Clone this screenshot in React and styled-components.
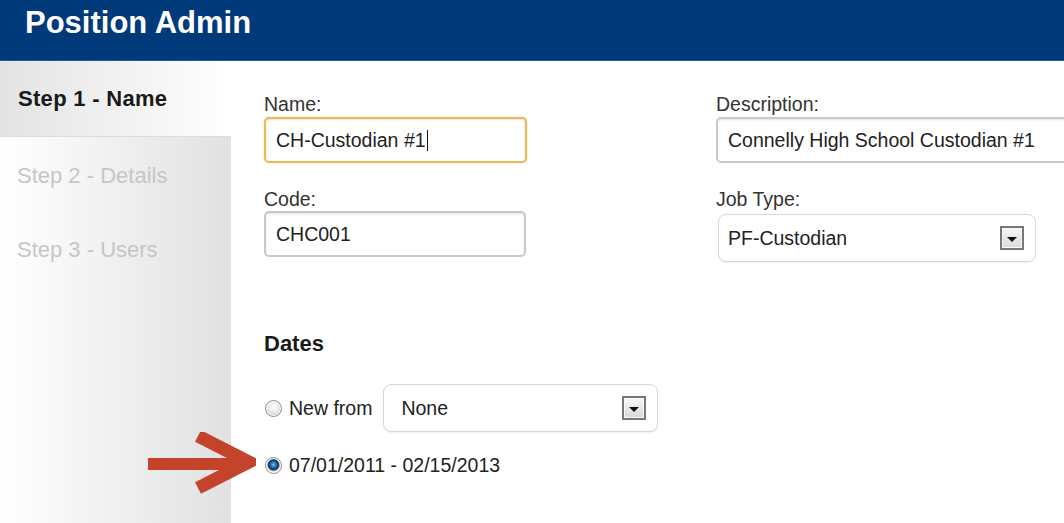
import React from "react"
import styled, { createGlobalStyle } from "styled-components"

const GlobalStyle = createGlobalStyle`
  html, body {
    margin: 0;
    padding: 0;
    background: #fff;
    overflow: hidden;
  }
  body {
    font-family: "Liberation Sans", Arial, sans-serif;
    color: #333;
  }
`

const Page = styled.div`
  width: 1064px;
  height: 523px;
  overflow: hidden;
  position: relative;
  display: flex;
  flex-direction: column;
`

const Header = styled.header`
  height: 61px;
  flex: none;
  background: #013a7a;
  border-bottom: 1px solid #2a5590;
  box-sizing: border-box;
  padding: 7px 0 0 25px;
  h1 {
    margin: 0;
    font-size: 31px;
    line-height: 31px;
    font-weight: 700;
    color: #fff;
  }
`

const Body = styled.div`
  flex: 1;
  display: flex;
`

const Sidebar = styled.nav`
  width: 231px;
  flex: none;
  display: flex;
  flex-direction: column;
`

const Step = styled.div`
  height: ${(p) => (p.active ? 75 : 74)}px;
  flex: none;
  box-sizing: border-box;
  padding-left: ${(p) => (p.active ? 18 : 17)}px;
  padding-top: ${(p) => (p.active ? 0 : 3)}px;
  display: flex;
  align-items: center;
  font-size: 22px;
  font-weight: ${(p) => (p.active ? 700 : 400)};
  letter-spacing: ${(p) => (p.active ? 0.3 : 0)}px;
  color: ${(p) => (p.active ? "#1a1a1a" : "#c6c6c6")};
  background: ${(p) =>
    p.active ? "linear-gradient(to right, #e3e3e3, #ffffff)" : "transparent"};
`

const StepList = styled.div`
  flex: 1;
  border-top: 1px solid #dcdcdc;
  background: linear-gradient(to right, #ffffff, #e1e1e1);
`

const Main = styled.main`
  flex: 1;
  padding: 32px 0 0 33px;
  font-size: 19.5px;
`

const FormGrid = styled.div`
  display: grid;
  grid-template-columns: 452px 1fr;
  row-gap: 25px;
`

const Field = styled.div`
  display: flex;
  flex-direction: column;
  gap: ${(p) => p.gap ?? 2}px;
`

const Label = styled.label`
  line-height: 22px;
  color: #333;
`

const TextBox = styled.div`
  box-sizing: border-box;
  width: ${(p) => p.width}px;
  height: 46px;
  border: 2px solid ${(p) => (p.focused ? "#e9b95a" : "#c9c9c9")};
  border-radius: 5px;
  box-shadow: inset 0 1px 2px rgba(0, 0, 0, 0.12)
    ${(p) => (p.focused ? ", 0 0 2px rgba(233, 185, 90, 0.7)" : "")};
  padding-left: 10px;
  display: flex;
  align-items: center;
  color: #222;
  white-space: nowrap;
`

const Caret = styled.span`
  display: inline-block;
  width: 1.5px;
  height: 21px;
  background: #111;
  margin-left: 1px;
`

const SelectBox = styled.div`
  box-sizing: border-box;
  width: ${(p) => p.width}px;
  height: 48px;
  margin-left: ${(p) => p.offset ?? 0}px;
  border: 1px solid #d6d6d6;
  border-radius: 8px;
  box-shadow: 0 1px 1px rgba(0, 0, 0, 0.06);
  padding: 0 11px 0 ${(p) => p.pad}px;
  display: flex;
  align-items: center;
  justify-content: space-between;
  color: #222;
  background: #fff;
`

const DropButton = styled.span`
  width: 24px;
  height: 24px;
  box-sizing: border-box;
  border: 2px solid #777;
  box-shadow: inset 0 0 0 1px #f8f8f8;
  background: linear-gradient(#f6f6f6, #d9d9d9);
  display: flex;
  align-items: center;
  justify-content: center;
  padding-top: 2px;
  &::after {
    content: "";
    border-left: 5px solid transparent;
    border-right: 5px solid transparent;
    border-top: 5px solid #111;
  }
`

const Section = styled.h2`
  margin: 69px 0 0;
  font-size: 22px;
  line-height: 26px;
  font-weight: 700;
  color: #1a1a1a;
`

const RadioRow = styled.div`
  display: flex;
  align-items: center;
  margin-top: ${(p) => p.top}px;
  gap: 7px;
  min-height: 24px;
`

const Radio = styled.span`
  width: 17px;
  height: 17px;
  box-sizing: border-box;
  border-radius: 50%;
  border: 1px solid #8e8e8e;
  flex: none;
  margin-left: 1px;
  background: ${(p) =>
    p.checked
      ? "radial-gradient(circle at 50% 45%, #7cc4f2 0, #1e7ac4 2.5px, #0b3e78 4.5px, #3b3b3b 5.2px, #9a9a9a 6px, #f4f4f4 7px)"
      : "radial-gradient(circle at 50% 40%, #ffffff 0, #f2f2f2 4px, #d4d4d4 8px)"};
  box-shadow: inset 0 0 0 1px #fff;
`

const RadioText = styled.span`
  color: #222;
  margin-right: 4px;
`

const Annotation = styled.svg`
  position: absolute;
  left: 148px;
  top: 432px;
`

export default function App() {
  return (
    <>
      <GlobalStyle />
      <Page>
        <Header>
          <h1>Position Admin</h1>
        </Header>
        <Body>
          <Sidebar>
            <Step active>Step 1 - Name</Step>
            <StepList>
              <Step>Step 2 - Details</Step>
              <Step>Step 3 - Users</Step>
            </StepList>
          </Sidebar>
          <Main>
            <FormGrid>
              <Field>
                <Label>Name:</Label>
                <TextBox width={263} focused>
                  CH-Custodian #1
                  <Caret />
                </TextBox>
              </Field>
              <Field>
                <Label>Description:</Label>
                <TextBox width={370}>Connelly High School Custodian #1</TextBox>
              </Field>
              <Field gap={1}>
                <Label>Code:</Label>
                <TextBox width={262}>CHC001</TextBox>
              </Field>
              <Field gap={4}>
                <Label>Job Type:</Label>
                <SelectBox width={318} offset={2} pad={9}>
                  PF-Custodian
                  <DropButton />
                </SelectBox>
              </Field>
            </FormGrid>

            <Section>Dates</Section>

            <RadioRow top={27}>
              <Radio />
              <RadioText>New from</RadioText>
              <SelectBox width={275} pad={17}>
                None
                <DropButton />
              </SelectBox>
            </RadioRow>
            <RadioRow top={21}>
              <Radio checked />
              <RadioText>07/01/2011 - 02/15/2013</RadioText>
            </RadioRow>
          </Main>
        </Body>

        <Annotation width="108" height="62" viewBox="0 0 108 62">
          <path d="M0 32 H92" stroke="#c3432b" strokeWidth="12" fill="none" />
          <path
            d="M50 4 L101 30 L50 56"
            stroke="#c3432b"
            strokeWidth="13"
            fill="none"
            strokeLinejoin="miter"
          />
        </Annotation>
      </Page>
    </>
  )
}
